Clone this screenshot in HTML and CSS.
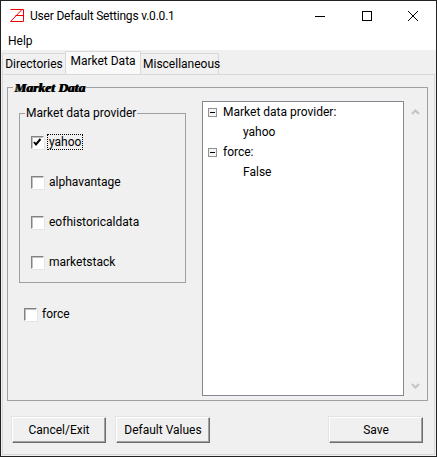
FILE: index.html
```html
<!DOCTYPE html>
<html lang="en">
<head>
    <meta charset="UTF-8">
    <title>User Default Settings v.0.0.1</title>
    <link rel="stylesheet" href="styles.css">
</head>
<body>
    <div class="window">
        <div class="titlebar">
            <svg class="app-icon" width="16" height="16" viewBox="0 0 16 16">
                <path d="M1.5 1.5H14.5V13.5H1.5L13 1.5M6.5 7.5H14.5" fill="none" stroke="#f00000" stroke-width="1"/>
            </svg>
            <span class="title">User Default Settings v.0.0.1</span>
            <svg class="win-btn" width="46" height="31" viewBox="0 0 46 31"><path d="M17 15.5H27" stroke="#000"/></svg>
            <svg class="win-btn" width="46" height="31" viewBox="0 0 46 31"><rect x="18.5" y="10.5" width="9" height="9" fill="none" stroke="#000"/></svg>
            <svg class="win-btn" width="46" height="31" viewBox="0 0 46 31"><path d="M18 10L28 20M28 10L18 20" stroke="#000" fill="none"/></svg>
        </div>
        <div class="menubar">Help</div>

        <div class="tabs">
            <div class="tab">Directories</div>
            <div class="tab tab-active">Market Data</div>
            <div class="tab">Miscellaneous</div>
        </div>

        <div class="tab-panel">
            <fieldset class="market-frame">
                <legend class="market-legend">Market Data</legend>
                <div class="market-body">
                    <div class="left-col">
                        <fieldset class="provider-frame">
                            <legend class="provider-legend">Market data provider</legend>
                            <label class="check-row">
                                <span class="check-box">
                                    <svg width="11" height="11" viewBox="0 0 11 11"><path d="M2 5L4 7.5L8.5 2" fill="none" stroke="#000" stroke-width="2"/></svg>
                                </span>
                                <span class="check-text focused">yahoo</span>
                            </label>
                            <label class="check-row"><span class="check-box"></span><span class="check-text">alphavantage</span></label>
                            <label class="check-row"><span class="check-box"></span><span class="check-text">eofhistoricaldata</span></label>
                            <label class="check-row"><span class="check-box"></span><span class="check-text">marketstack</span></label>
                        </fieldset>
                        <label class="check-row force-row"><span class="check-box"></span><span class="check-text">force</span></label>
                    </div>

                    <div class="tree-box">
                        <div class="tree">
                            <div class="tree-row"><span class="tree-toggle"></span>Market data provider:</div>
                            <div class="tree-leaf">yahoo</div>
                            <div class="tree-row"><span class="tree-toggle"></span>force:</div>
                            <div class="tree-leaf">False</div>
                        </div>
                    </div>
                    <div class="scrollbar">
                        <svg width="9" height="6" viewBox="0 0 9 6"><path d="M1 5L4.5 1.5L8 5" fill="none" stroke="#c4c4c4" stroke-width="2"/></svg>
                        <svg width="9" height="6" viewBox="0 0 9 6"><path d="M1 1L4.5 4.5L8 1" fill="none" stroke="#c4c4c4" stroke-width="2"/></svg>
                    </div>
                </div>
            </fieldset>

            <div class="button-row">
                <button class="btn">Cancel/Exit</button>
                <button class="btn">Default Values</button>
                <button class="btn btn-save">Save</button>
            </div>
        </div>
    </div>
</body>
</html>
```

FILE: styles.css
```css
* {
    box-sizing: border-box;
}

html, body {
    margin: 0;
    height: 100%;
}

body {
    font-family: Roboto, "Noto Sans", sans-serif;
    font-size: 12px;
    color: #000;
    background: #f0f0f0;
}

.window {
    width: 437px;
    height: 457px;
    border: 1px solid #222;
    display: flex;
    flex-direction: column;
    overflow: hidden;
}

.titlebar {
    height: 30px;
    background: #fff;
    display: flex;
    align-items: center;
    padding-left: 8px;
    flex-shrink: 0;
}

.app-icon {
    margin-right: 5px;
}

.title {
    flex: 1;
    letter-spacing: -0.2px;
}

.win-btn {
    display: block;
}

.menubar {
    height: 19px;
    background: #fff;
    padding-left: 7px;
    line-height: 20px;
    flex-shrink: 0;
}

.tabs {
    display: flex;
    align-items: flex-end;
    height: 24px;
    padding: 0 0 0 1px;
    flex-shrink: 0;
}

.tab {
    height: 21px;
    line-height: 20px;
    padding: 0 2px;
    text-align: center;
    background: #f0f0f0;
    border: 1px solid #d9d9d9;
    border-bottom: none;
    width: 64px;
}

.tab-active {
    height: 23px;
    width: 76px;
    background: #f9f9f9;
    margin: 0 -1px;
    position: relative;
    line-height: 19px;
}

.tab:last-child {
    width: 79px;
}

.tab-panel {
    flex: 1;
    margin: 0 1px 1px 1px;
    border: 1px solid #d9d9d9;
    display: flex;
    flex-direction: column;
    padding: 6px 6px 0 4px;
}

.market-frame {
    margin: 0;
    padding: 0;
    border: 1px solid #a0a0a0;
    height: 320px;
    flex-shrink: 0;
    min-width: 0;
}

.market-legend {
    margin-left: 5px;
    padding: 0 1px;
    font-family: "Liberation Serif", serif;
    font-weight: bold;
    font-style: italic;
    font-size: 13.5px;
    line-height: 13px;
    text-shadow: 1px 0 0 #000;
}

.market-body {
    display: flex;
    height: 100%;
    padding: 7px 0 5px 11px;
}

.left-col {
    width: 183px;
    flex-shrink: 0;
}

.provider-frame {
    margin: 5px 0 0 0;
    padding: 0 0 0 11px;
    width: 167px;
    height: 177px;
    border: 1px solid #a0a0a0;
    min-width: 0;
}

.provider-legend {
    margin-left: -6px;
    padding: 0 1px;
    line-height: 15px;
}

.check-row {
    display: flex;
    align-items: center;
    height: 16px;
    margin-top: 24px;
}

.provider-legend + .check-row {
    margin-top: 13px;
}

.force-row {
    margin: 23px 0 0 5px;
}

.check-box {
    width: 13px;
    height: 13px;
    background: #fff;
    border: 1px solid;
    border-color: #828282 #fff #fff #828282;
    box-shadow: inset 1px 1px 0 #c0c0c0, 1px 1px 0 #e4e4e4;
    margin-right: 3px;
    display: flex;
    align-items: center;
    justify-content: center;
    flex-shrink: 0;
}

.check-text {
    padding: 0 1px;
    border: 1px dotted transparent;
}

.focused {
    border-color: #000;
}

.tree-box {
    width: 202px;
    height: 295px;
    background: #fff;
    border: 1px solid #828790;
    padding: 0 0 0 5px;
    flex-shrink: 0;
}

.tree-row {
    height: 20px;
    line-height: 20px;
    display: flex;
    align-items: center;
}

.tree-leaf {
    height: 20px;
    line-height: 20px;
    padding-left: 35px;
}

.tree-toggle {
    width: 9px;
    height: 9px;
    border: 1px solid #919191;
    margin-right: 6px;
    background: linear-gradient(#000, #000) center / 5px 1px no-repeat, #f4f4f4;
}

.scrollbar {
    flex: 1;
    height: 295px;
    display: flex;
    flex-direction: column;
    justify-content: space-between;
    align-items: center;
    padding: 8px 0 7px 0;
}

.button-row {
    display: flex;
    margin-top: 16px;
    padding-left: 5px;
}

.btn {
    width: 94px;
    height: 26px;
    margin-right: 10px;
    padding: 0;
    font: inherit;
    color: #000;
    background: #f0f0f0;
    border: 1px solid;
    border-color: #fff #6d6d6d #6d6d6d #fff;
    box-shadow: inset -1px -1px 0 #a0a0a0, -1px -1px 0 #e3e3e3;
}

.btn-save {
    margin: 0 5px 0 auto;
}
```
